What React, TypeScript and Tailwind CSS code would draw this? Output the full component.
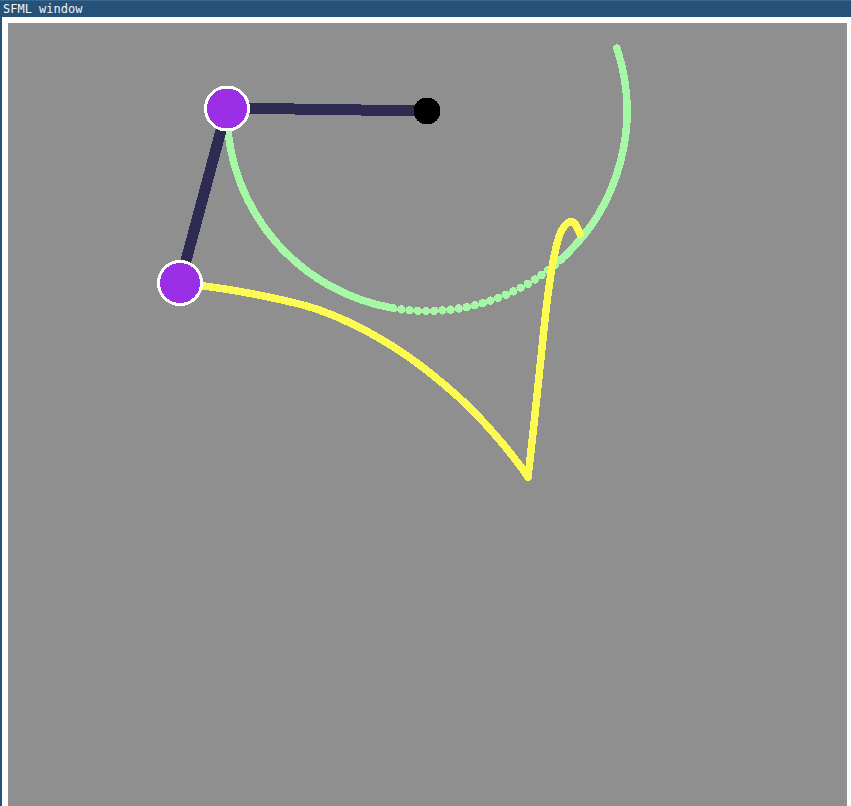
import React from "react";

// centre of the pivot and the length of the first arm
const PIVOT = { x: 427, y: 111 };
const R = 200;

const pt = (deg: number) => {
  const a = (deg * Math.PI) / 180;
  return { x: PIVOT.x + R * Math.cos(a), y: PIVOT.y + R * Math.sin(a) };
};

// catmull-rom -> cubic bezier so the trail is smooth
function smoothPath(points: number[][]) {
  let d = `M${points[0][0]} ${points[0][1]}`;
  for (let i = 0; i < points.length - 1; i++) {
    const p0 = points[i - 1] || points[i];
    const p1 = points[i];
    const p2 = points[i + 1];
    const p3 = points[i + 2] || p2;
    const c1x = p1[0] + (p2[0] - p0[0]) / 6;
    const c1y = p1[1] + (p2[1] - p0[1]) / 6;
    const c2x = p2[0] - (p3[0] - p1[0]) / 6;
    const c2y = p2[1] - (p3[1] - p1[1]) / 6;
    d += ` C${c1x} ${c1y} ${c2x} ${c2y} ${p2[0]} ${p2[1]}`;
  }
  return d;
}

const yellowA = [
  [180, 283], [237, 291], [303, 305], [337, 317], [370, 333], [403, 353],
  [435, 377], [467, 405], [497, 437], [518, 463], [528, 477],
];
const yellowB = [
  [528, 477], [533, 433], [540, 367], [547, 302], [553, 262], [560, 234],
  [569, 222], [575, 224], [580, 234],
];

function arc(from: number, to: number) {
  const a = pt(from);
  const b = pt(to);
  return `M${a.x} ${a.y} A${R} ${R} 0 0 1 ${b.x} ${b.y}`;
}

export default function App() {
  const dots = Array.from({ length: 23 }, (_, i) => pt(48 + i * 2.35));

  return (
    <div className="w-[851px] h-[806px] flex flex-col overflow-hidden bg-white">
      {/* window title */}
      <div className="h-[17px] bg-[#26527a] border-t border-[#3a6890] flex items-center px-[3px]">
        <span className="text-[12px] leading-none text-[#eef3f7] font-['DejaVu_Sans_Mono',monospace]">
          SFML window
        </span>
      </div>

      <div className="flex-1 flex border-l-2 border-[#26527a] pl-[6px] pt-[6px] pr-[4px] min-h-0">
        <div className="flex-1 bg-[#8f8f8f]">
          <svg viewBox="8 23 839 783" className="w-full h-full block" shapeRendering="crispEdges">
            {/* trail of the first bob */}
            <path d={arc(-18.3, 48)} stroke="#a6f7a6" strokeWidth={7.5} fill="none" strokeLinecap="round" />
            <path d={arc(100, 178)} stroke="#a6f7a6" strokeWidth={7.5} fill="none" strokeLinecap="round" />
            {dots.map((d, i) => (
              <circle key={i} cx={d.x} cy={d.y} r={4.2} fill="#a6f7a6" />
            ))}

            {/* trail of the second bob */}
            <path d={smoothPath(yellowA)} stroke="#fbfb52" strokeWidth={7.5} fill="none" strokeLinecap="round" strokeLinejoin="round" />
            <path d={smoothPath(yellowB)} stroke="#fbfb52" strokeWidth={7.5} fill="none" strokeLinecap="round" strokeLinejoin="round" />

            {/* arms */}
            <line x1={227} y1={108} x2={427} y2={111} stroke="#2d2b52" strokeWidth={11} />
            <line x1={227} y1={108} x2={180} y2={283} stroke="#2d2b52" strokeWidth={11} />

            <circle cx={427} cy={111} r={13.5} fill="#000" />
            <circle cx={227} cy={108.5} r={21.5} fill="#9a2fe6" stroke="#fff" strokeWidth={3} />
            <circle cx={180} cy={283} r={21.5} fill="#9a2fe6" stroke="#fff" strokeWidth={3} />
          </svg>
        </div>
      </div>
    </div>
  );
}
